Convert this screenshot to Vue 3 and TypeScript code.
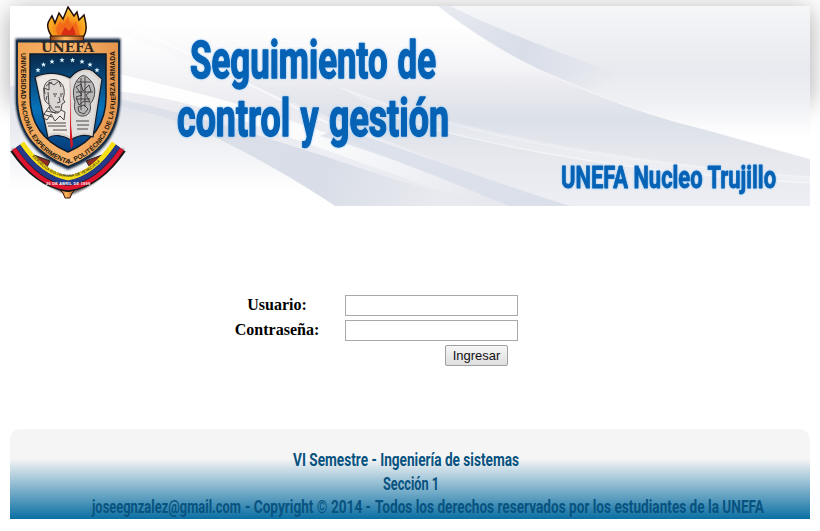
<script setup lang="ts">
import { ref } from 'vue'

interface Line { text: string; x: number; y: number; width: number }

const usuario = ref('')
const clave = ref('')

const titleLines: Line[] = [
  { text: 'Seguimiento de', x: 180, y: 72, width: 246 },
  { text: 'control y gestión', x: 167, y: 130, width: 272 },
]

const footerLines: Line[] = [
  { text: 'VI Semestre - Ingeniería de sistemas', x: 283, y: 37, width: 226 },
  { text: 'Sección 1', x: 373, y: 60.5, width: 56 },
  { text: 'joseegnzalez@gmail.com', x: 82, y: 84, width: 149 },
  { text: '- Copyright © 2014 -', x: 235, y: 84, width: 126 },
  { text: 'Todos los derechos reservados por los estudiantes de la UNEFA', x: 365, y: 84, width: 389 },
]

const stars = [
  [38, 70], [43.5, 64.5], [52, 61.5], [62, 60], [72.5, 60], [82, 61.5], [90, 64.5], [97, 70],
]
</script>

<template>
  <div class="page">
    <header class="banner">
      <svg class="art" viewBox="0 0 800 200" width="800" height="200">
        <defs>
          <linearGradient id="band" gradientUnits="userSpaceOnUse" x1="0" y1="0" x2="0" y2="200">
            <stop offset="0.1" stop-color="#fff" />
            <stop offset="0.32" stop-color="#f3f3f6" />
            <stop offset="0.42" stop-color="#e8e9ee" />
            <stop offset="0.57" stop-color="#dbe0e9" />
            <stop offset="0.75" stop-color="#e7e8ed" />
            <stop offset="1" stop-color="#eeeff4" />
          </linearGradient>
          <linearGradient id="left" gradientUnits="userSpaceOnUse" x1="0" y1="0" x2="0" y2="200">
            <stop offset="0.15" stop-color="#fff" />
            <stop offset="0.5" stop-color="#ebebf0" />
            <stop offset="0.75" stop-color="#eceef3" />
            <stop offset="1" stop-color="#e6e8ee" />
          </linearGradient>
          <linearGradient id="low" gradientUnits="userSpaceOnUse" x1="0" y1="88" x2="0" y2="185">
            <stop offset="0" stop-color="#dfe2ea" />
            <stop offset="0.35" stop-color="#e9ebf0" />
            <stop offset="1" stop-color="#fff" />
          </linearGradient>
          <linearGradient id="lowband" gradientUnits="userSpaceOnUse" x1="100" y1="90" x2="430" y2="190">
            <stop offset="0" stop-color="#dfe2ea" />
            <stop offset="0.65" stop-color="#d8dde7" />
            <stop offset="1" stop-color="#e9eaef" />
          </linearGradient>
          <linearGradient id="right" gradientUnits="userSpaceOnUse" x1="0" y1="0" x2="0" y2="155">
            <stop offset="0" stop-color="#f5f6f8" />
            <stop offset="0.4" stop-color="#e9eaef" />
            <stop offset="0.62" stop-color="#eff0f4" />
            <stop offset="0.85" stop-color="#fff" />
          </linearGradient>
          <linearGradient id="gleam" gradientUnits="userSpaceOnUse" x1="100" y1="70" x2="460" y2="180">
            <stop offset="0" stop-color="#fff" />
            <stop offset="0.5" stop-color="#fff" stop-opacity="0.85" />
            <stop offset="1" stop-color="#fff" stop-opacity="0" />
          </linearGradient>
          <linearGradient id="streak" gradientUnits="userSpaceOnUse" x1="440" y1="5" x2="610" y2="70">
            <stop offset="0" stop-color="#d2d8e5" stop-opacity="0.4" />
            <stop offset="0.45" stop-color="#d2d8e5" stop-opacity="0.75" />
            <stop offset="1" stop-color="#d2d8e5" stop-opacity="0" />
          </linearGradient>
          <radialGradient id="fire" cx="0.5" cy="0.75" r="0.75">
            <stop offset="0" stop-color="#e83d14" />
            <stop offset="0.45" stop-color="#f7941c" />
            <stop offset="1" stop-color="#ffe23a" />
          </radialGradient>
          <linearGradient id="gold" x1="0" y1="0" x2="1" y2="0">
            <stop offset="0" stop-color="#f0a354" />
            <stop offset="0.5" stop-color="#f9b56c" />
            <stop offset="1" stop-color="#e4934a" />
          </linearGradient>
          <linearGradient id="bronze" x1="0" y1="0" x2="1" y2="0">
            <stop offset="0" stop-color="#8c3a12" />
            <stop offset="0.45" stop-color="#ffb95e" />
            <stop offset="1" stop-color="#a5481a" />
          </linearGradient>
          <linearGradient id="sky" x1="0" y1="0" x2="0" y2="1">
            <stop offset="0" stop-color="#082849" />
            <stop offset="0.55" stop-color="#0872b9" />
            <stop offset="1" stop-color="#073a78" />
          </linearGradient>
          <filter id="halo" x="-10%" y="-20%" width="120%" height="140%">
            <feGaussianBlur stdDeviation="1.3" />
          </filter>
          <path id="motto" d="M11 47V91C11.500 127 31 149 58 158C86 149 105 127 105.500 91V40" />
          <path id="scroll" d="M20 148Q58 194 97 148" />
        </defs>

        <rect width="800" height="200" fill="#fff" />
        <path d="M0 0H800V200H325L0 90Z" fill="url(#left)" />
        <path d="M30 0H430L800 153V200H560C430 165 250 75 30 0Z" fill="url(#band)" />
        <path d="M70 0C140 25 220 70 320 118" fill="none" stroke="#fff" stroke-width="2" opacity="0.6" />
        <path d="M0 80C110 84 220 120 320 152C390 176 440 190 470 200H325L0 110Z" fill="url(#lowband)" />
        <path d="M0 86C80 90 150 105 205 131C255 156 294 179 325 200H0Z" fill="url(#low)" />
        <path d="M90 64C180 83 270 108 350 140C410 164 460 184 510 200H470C400 173 300 139 225 112C170 94 130 86 90 84Z" fill="url(#gleam)" />
        <path d="M330 122C400 145 480 175 560 200H500C440 176 380 150 310 130Z" fill="#d4dae6" opacity="0.65" />
        <path d="M330 80C420 115 560 150 800 171V177C630 170 510 143 430 126C390 114 360 103 330 80Z" fill="#fff" opacity="0.22" />
        <path d="M330 82C430 120 560 154 800 171" fill="none" stroke="#fff" stroke-width="1" opacity="0.35" />
        <path d="M350 100C440 132 580 164 800 177" fill="none" stroke="#fff" stroke-width="1.200" opacity="0.5" />
        <path d="M428 0C452 20 492 46 530 64C590 92 640 110 697 124L800 153V0Z" fill="url(#right)" />
        <path d="M428 0C452 20 492 46 530 64C548 72 565 78 580 84L620 72C540 44 480 20 440 0Z" fill="url(#streak)" />
        <path d="M428 0C452 20 492 46 530 64C590 92 640 110 697 124L800 153" fill="none" stroke="#fff" stroke-width="1" opacity="0.45" />

        <g class="emblem">
          <path d="M3 143C21 167 37 180 59 188C82 180 98 167 113 143" fill="none" stroke="#222" stroke-width="2" filter="url(#halo)" />
          <path d="M7 34H109V91C109 129 88 151 58 162C29 151 7 129 7 91Z" fill="#142b45" stroke="#142b45" stroke-width="3" filter="url(#halo)" />
          <path d="M42 31C34 18 39 15 42 10L45 17L49 7L53 13L58 1L64 10L67 6L69 14L74 9C76 17 78 25 73 31Z" fill="url(#fire)" stroke="#241008" stroke-width="1.5" />
          <path d="M48 29C44 22 48 21 50 15L53 22L58 10L61 22L66 15L68 23L70 29Z" fill="#f26a18" />
          <path d="M51 29L55 21L59 25L63 20L66 29Z" fill="#d92e16" />
          <path d="M40 30H74L73 35H41Z" fill="url(#bronze)" stroke="#35170c" />
          <path d="M49 179H65L63 184H65L62 187L60 192H55L53 187L50 184H52Z" fill="url(#bronze)" stroke="#35170c" />
          <path d="M7 35.500H109V91C109 129 88 149 58 161C29 149 7 129 7 91Z" fill="url(#gold)" stroke="#152c43" stroke-width="2" />
          <path d="M20 48H96V91C96 120 79 137 58 146C37 137 20 120 20 91Z" fill="url(#sky)" stroke="#0b1b2c" stroke-width="1.5" />
          <text x="31" y="46" textLength="53" lengthAdjust="spacingAndGlyphs" class="acronym">UNEFA</text>
          <g fill="#d9f5ff" class="stars">
            <path v-for="([x, y], i) in stars" :key="i" :transform="`translate(${x - 10} ${y - 6})`"
              d="M0-2.600L.7-.8L2.600-.8L1.100.4L1.700 2.400L0 1.200L-1.700 2.400L-1.100.4L-2.600-.8L-.7-.8Z" />
          </g>
          <path d="M25 71C36 65 51 67 60 72C67 63 76 61 83 65L92 73L83 131C75 128 67 130 61 134C53 129 43 128 38 132Z" fill="#d9d2cc" stroke="#101c2b" stroke-width="1.200" />
          <path d="M27 73C38 66 50 68 59 74L61 131C53 126 45 126 39 128Z" fill="#efe9e5" />
          <path d="M61 75C67 66 76 63 82 68L89 75L81 128C75 126 67 127 62 131Z" fill="#e0dedd" />
          <g class="sketch">
            <path d="M34 87C32 75 43 70 50 76C55 80 55 88 53 93L55 96L52 98L51 104C48 109 43 107 40 104L39 98C34 96 34 92 34 87Z" fill="#d9d6d4" />
            <path d="M35 88L34 82L39 84L39 76L44 79L49 75L51 81M36 80L42 76M37 90L36 94M38 86L39 98M43 88H47M50 88H53M44 90H46M50 90H52M49 91L50 96L47 97M45 101H50M40 99C42 104 45 106 49 106" />
            <path d="M39 101L32 111L37 114L41 108L45 115L50 110L54 114L55 106L51 104M33 108L42 111M36 105L46 107M37 117H56M38 120H56M43 124H57" />
            <path d="M70 71C63 77 62 88 65 96C63 102 66 109 71 110C78 111 82 105 80 98C87 91 86 78 79 73C76 69 72 69 70 71Z" fill="#b9b8b8" />
            <path d="M66 81L71 78L73 85L79 79L81 85L76 89L80 96L74 95L69 99L66 91L72 89ZM68 101L74 99L78 103L74 108L69 106ZM71 72V104M75 71V101M66 93H80M67 76H81M66 86H83M66 115H79M67 119H79M67 123H78" />
          </g>
          <path d="M60 75L61 119L63 139L61 143L60 134Z" fill="#d71924" />
          <text class="motto"><textPath href="#motto" textLength="266" lengthAdjust="spacingAndGlyphs">UNIVERSIDAD NACIONAL EXPERIMENTAL POLITÉCNICA DE LA FUERZA ARMADA</textPath></text>
          <path d="M24 149L40 155L36 163ZM92 149L76 155L81 163Z" fill="#8b2d22" stroke="#222" />
          <path d="M7 141C22 163 39 175 58 178C77 175 94 163 109 141" fill="none" stroke="#171717" stroke-width="16" />
          <path d="M12 137C26 158 42 169 58 173C75 169 90 158 104 137" fill="none" stroke="#f7df18" stroke-width="5" />
          <path d="M8 140C23 162 40 174 58 177C77 174 93 162 108 140" fill="none" stroke="#253988" stroke-width="5" />
          <path d="M4 143C20 167 38 180 58 182C78 180 96 167 112 143" fill="none" stroke="#dd1430" stroke-width="4.500" />
          <text class="ribbon dark"><textPath href="#scroll" startOffset="3">REPUBLICA BOLIVARIANA DE VENEZUELA</textPath></text>
          <text class="ribbon light" x="36" y="179" textLength="44">26 DE ABRIL DE 1999</text>
        </g>

        <g class="titles">
          <text v-for="line in titleLines" :key="line.text" :x="line.x" :y="line.y" :textLength="line.width" lengthAdjust="spacingAndGlyphs">{{ line.text }}</text>
          <text class="campus" x="551" y="182" textLength="215" lengthAdjust="spacingAndGlyphs">UNEFA Nucleo Trujillo</text>
        </g>
      </svg>
    </header>

    <main class="login">
      <form class="form" @submit.prevent>
        <label for="usuario">Usuario:</label>
        <input id="usuario" v-model="usuario" type="text" />
        <label for="clave">Contraseña:</label>
        <input id="clave" v-model="clave" type="password" />
        <button type="submit">Ingresar</button>
      </form>
    </main>

    <footer class="footer">
      <svg width="800" height="90" viewBox="0 0 800 90">
        <text v-for="line in footerLines" :key="line.text" :x="line.x" :y="line.y" :textLength="line.width" lengthAdjust="spacingAndGlyphs">{{ line.text }}</text>
      </svg>
    </footer>
  </div>
</template>

<style>
body { margin: 0; background: #fff; overflow: hidden; }
</style>

<style scoped>
.page { width: 800px; height: 525px; padding: 6px 10px 0; display: flex; flex-direction: column; }
.banner { width: 800px; height: 94px; margin-bottom: 106px; box-shadow: 0 4px 24px rgba(0, 0, 0, 0.35); }
.art { display: block; position: relative; }
.titles text { font-family: "Roboto", sans-serif; font-weight: 700; font-size: 51px; fill: #0562b5; stroke: #0562b5; stroke-width: 1.4px; stroke-linejoin: round; word-spacing: 2px; filter: drop-shadow(0 0 1px #8cc4f5); }
.titles .campus { font-size: 31px; stroke-width: 0.8px; word-spacing: 0; }
.acronym { font: 700 12px "DejaVu Serif", serif; fill: #33291f; }
.motto { font: 700 6.6px "Liberation Sans", sans-serif; fill: #24170d; }
.sketch { fill: none; stroke: #3a3737; stroke-width: 0.9; }
.ribbon { font: 700 3.8px "Liberation Sans", sans-serif; }
.dark { fill: #4e4310; }
.light { fill: #fff; }
.login { height: 223px; box-sizing: border-box; padding: 89px 0 0 215px; }
.form { display: grid; grid-template-columns: 104px 173px; column-gap: 16px; row-gap: 4px; grid-auto-rows: 21px; }
label { font: 700 16px/20px "Liberation Serif", serif; text-align: center; color: #000; }
input { width: 173px; height: 21px; box-sizing: border-box; border: 1px solid #a9a9a9; background: #fff; padding: 1px; margin: 0; outline: none; }
button { grid-column: 2; justify-self: end; margin: 0 10px 0 0; width: 63px; height: 21px; box-sizing: border-box; padding: 0; border: 1px solid #a0a0a0; border-radius: 2px; background: linear-gradient(#f6f6f6, #dedede); font: 13px/18px "Liberation Sans", sans-serif; color: #111; }
.footer { width: 800px; height: 90px; border-radius: 10px 10px 0 0; background: linear-gradient(#f5f5f5 0 33%, #0a6fa3 100%); overflow: hidden; }
.footer svg { display: block; }
.footer text { font-family: "Roboto", sans-serif; font-weight: 700; font-size: 18.5px; fill: #07527f; }
</style>
